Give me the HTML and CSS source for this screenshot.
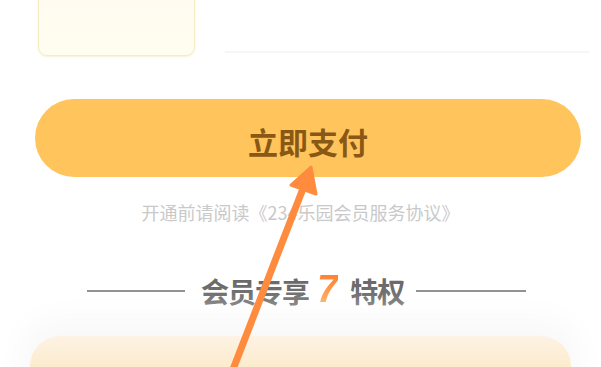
FILE: index.html
```html
<!DOCTYPE html>
<html lang="zh-CN">
  <head>
    <meta charset="UTF-8" />
    <meta name="viewport" content="width=device-width, initial-scale=1.0" />
    <title>立即支付</title>
    <link rel="stylesheet" href="styles.css">
  </head>
  <body>
    <div class="page">
      <div class="top-row">
        <div class="plan-card"></div>
        <div class="divider"></div>
      </div>

      <button class="pay-btn">立即支付</button>

      <p class="agreement">开通前请阅读《234乐园会员服务协议》</p>

      <div class="perk-title">
        <span class="perk-line left"></span>
        <span class="perk-text">会员专享</span>
        <em class="perk-num">7</em>
        <span class="perk-text">特权</span>
        <span class="perk-line right"></span>
      </div>

      <div class="perk-panel"></div>

      <!-- annotation arrow drawn over the page -->
      <svg class="arrow" width="601" height="367" viewBox="0 0 601 367">
        <line x1="232" y1="372" x2="304" y2="186" stroke="#ff8b3e" stroke-width="7" stroke-linecap="round" />
        <polygon points="311,167 316,194 291,185" fill="#ff8b3e" stroke="#ff8b3e" stroke-width="3" stroke-linejoin="round" />
      </svg>
    </div>
  </body>
</html>
```

FILE: styles.css
```css
* {
  box-sizing: border-box;
}
body {
  margin: 0;
  background-color: #fff;
  font-family: "Noto Sans CJK SC", "Noto Sans", sans-serif;
  overflow: hidden;
}
.page {
  position: relative;
  width: 601px;
  height: 367px;
  overflow: hidden;
  display: flex;
  flex-direction: column;
}
.page > * {
  flex-shrink: 0;
}
.top-row {
  display: flex;
  align-items: flex-end;
  height: 56px;
}
.plan-card {
  width: 157px;
  height: 66px;
  margin-top: -10px;
  margin-left: 38px;
  background: linear-gradient(#fffbf0, #fffdf0);
  border: 1.5px solid #f3ecc4;
  border-radius: 9px;
  box-shadow: 0 1px 2px rgba(230, 220, 160, 0.4);
}
.divider {
  flex: 1;
  height: 2px;
  margin: 0 12px 3px 30px;
  background-color: #f6f6f6;
}
.pay-btn {
  display: block;
  width: 546px;
  height: 78px;
  margin: 43px 0 0 35px;
  border: none;
  border-radius: 39px;
  background-color: #ffc55c;
  color: #8a5815;
  font-family: inherit;
  font-size: 30px;
  font-weight: 700;
  padding: 6px 0 0;
}
.agreement {
  margin: 22px 0 0;
  text-align: center;
  color: #c9c9c9;
  font-size: 18px;
  line-height: 26px;
}
.perk-title {
  display: flex;
  align-items: center;
  margin-top: 46px;
  padding-left: 87px;
  height: 40px;
}
.perk-line {
  height: 2px;
  background-color: #8e8e8e;
}
.perk-line.left {
  width: 98px;
  margin-right: 16px;
}
.perk-line.right {
  width: 110px;
  margin-left: 12px;
}
.perk-text {
  color: #6a6a6a;
  font-size: 28px;
  font-weight: 600;
  letter-spacing: -1px;
  white-space: nowrap;
}
.perk-num {
  margin: -4px 12px 0 8px;
  font-style: italic;
  font-family: "Liberation Sans", sans-serif;
  font-size: 38px;
  font-weight: 700;
  line-height: 40px;
  color: #ff8a3a;
  background: linear-gradient(#ff7a30, #ffb055);
  -webkit-background-clip: text;
  background-clip: text;
  -webkit-text-fill-color: transparent;
}
.perk-panel {
  margin: 25px 30px 0;
  height: 60px;
  border-radius: 30px 30px 0 0;
  background: linear-gradient(#fdf2e4, #fbe6b8);
  box-shadow: 0 -10px 30px 10px #f9f9f9;
}
.arrow {
  position: absolute;
  left: 0;
  top: 0;
  pointer-events: none;
}
```
